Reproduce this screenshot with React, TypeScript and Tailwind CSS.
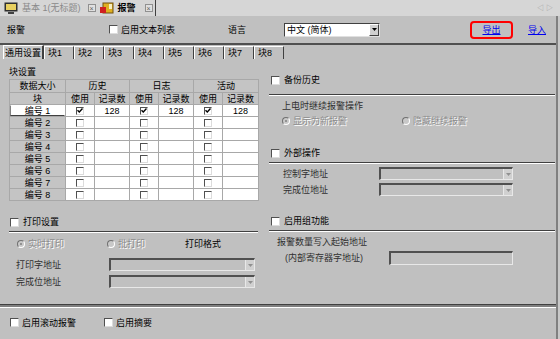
import React from 'react';

const Check = ({ on = false, small = false }: { on?: boolean; small?: boolean }) => (
  <span
    className={`${small ? 'w-[8px] h-[8px]' : 'w-[9px] h-[9px]'} inline-flex items-center justify-center shrink-0 bg-white border border-t-[#505050] border-l-[#505050] border-b-[#dcdcdc] border-r-[#dcdcdc]`}
  >
    {on && (
      <svg width="6" height="5" viewBox="0 0 6 5">
        <path d="M0.5 2.2 L2.3 4 L5.5 0.6" stroke="#000" strokeWidth="1.4" fill="none" />
      </svg>
    )}
  </span>
);

const Radio = ({ on = false }: { on?: boolean }) => (
  <span className="w-[8px] h-[8px] rounded-full shrink-0 inline-flex items-center justify-center bg-[#c8c8c8] border border-t-[#707070] border-l-[#707070] border-b-white border-r-white">
    {on && <span className="w-[2px] h-[2px] rounded-full bg-[#808080]" />}
  </span>
);

const Combo = ({ w }: { w: string }) => (
  <div className={`${w} h-[13px] flex border-t-2 border-l-2 border-t-[#505050] border-l-[#505050] border-b border-r border-b-[#e8e8e8] border-r-[#e8e8e8] bg-[#c0c0c0]`}>
    <div className="flex-1" />
    <div className="w-[9px] h-full bg-[#d0d0d0] border-l border-[#e8e8e8] flex items-center justify-center">
      <svg width="5" height="3" viewBox="0 0 5 3">
        <path d="M0 0h5L2.5 3z" fill="#909090" />
      </svg>
    </div>
  </div>
);

const Rule = () => <div className="h-[2px] border-t border-t-[#404040] border-b border-b-white" />;

const Off = ({ children }: { children: React.ReactNode }) => (
  <span className="text-[#8c8c8c] [text-shadow:1px_1px_0_#ffffff]">{children}</span>
);

const tabs = ['块1', '块2', '块3', '块4', '块5', '块6', '块7', '块8'];
const rows = [1, 2, 3, 4, 5, 6, 7, 8];

const hdr = 'bg-[#c4c4c4] flex items-center justify-center';

export default function App() {
  return (
    <div className="w-[560px] h-[339px] overflow-hidden bg-[#c8c8c8] text-[9px] leading-[12px] text-black font-['Liberation_Sans','Noto_Sans_CJK_SC',sans-serif]">
      {/* document tabs */}
      <div className="h-[16px] bg-[#d6d6d6] flex items-center pl-[4px]">
        <svg width="14" height="12" viewBox="0 0 14 12" className="shrink-0">
          <rect x="0.5" y="0.5" width="13" height="9" fill="#303030" />
          <rect x="2" y="2" width="10" height="6" fill="#e8d060" />
          <rect x="4" y="10" width="6" height="2" fill="#404040" />
        </svg>
        <span className="ml-[4px] text-[#8a8a8a]">基本 1(无标题)</span>
        <span className="ml-[7px] w-[8px] h-[8px] border border-[#909090] bg-[#e0e0e0] flex items-center justify-center text-[7px] leading-none text-[#606060]">×</span>
        <svg width="14" height="12" viewBox="0 0 14 12" className="ml-[4px] shrink-0">
          <rect x="3" y="1" width="10" height="10" fill="#e0b020" stroke="#705010" strokeWidth="1" />
          <rect x="0" y="5" width="6" height="6" fill="#d02020" />
          <rect x="9" y="2" width="3" height="5" fill="#f8f0c0" />
        </svg>
        <span className="ml-[4px] font-bold">报警</span>
        <span className="ml-[9px] w-[8px] h-[8px] border border-[#909090] bg-[#e0e0e0] flex items-center justify-center text-[7px] leading-none text-[#606060]">×</span>
        <span className="ml-[2px] w-[1px] h-[16px] bg-[#404040]" />
        <div className="flex-1" />
        <span className="text-[7px] text-[#a0a0a0] mr-[5px] tracking-[2px]">◁▷</span>
      </div>

      <div className="w-[558px] h-[323px] bg-[#c0c0c0] border-r-2 border-r-[#808080] flex flex-col">
        {/* header row */}
        <div className="h-[27px] flex items-center pl-[7px] shrink-0">
          <span className="w-[102px]">报警</span>
          <Check />
          <span className="ml-[3px] w-[107px]">启用文本列表</span>
          <span className="w-[56px]">语言</span>
          <div className="w-[96px] h-[14px] flex bg-white border border-t-[#404040] border-l-[#404040] border-b-[#e0e0e0] border-r-[#e0e0e0]">
            <span className="flex-1 pl-[2px] leading-[12px]">中文 (简体)</span>
            <span className="w-[10px] h-full bg-[#d0d0d0] border border-t-white border-l-white border-b-[#404040] border-r-[#404040] flex items-center justify-center">
              <svg width="5" height="3" viewBox="0 0 5 3"><path d="M0 0h5L2.5 3z" fill="#000" /></svg>
            </span>
          </div>
          <span className="ml-[90px] w-[43px] h-[18px] rounded-[4px] border-2 border-[#ff0000] flex items-center justify-center">
            <span className="text-[#0000ee] underline">导出</span>
          </span>
          <span className="ml-[15px] text-[#0000ee] underline">导入</span>
        </div>

        {/* settings tabs */}
        <div className="h-[16px] border-t-2 border-t-[#505050] flex items-end pl-[3px] shrink-0">
          <span className="h-[14px] w-[41px] flex items-center justify-center border-l border-t border-l-white border-t-white border-r-2 border-r-[#404040] bg-[#c8c8c8]">通用设置</span>
          {tabs.map((t) => (
            <span key={t} className="h-[13px] w-[30px] flex items-center pl-[3px] border-l border-t border-l-white border-t-white border-r border-r-[#404040]">
              {t}
            </span>
          ))}
        </div>

        {/* body */}
        <div className="h-[245px] flex shrink-0">
          {/* left column */}
          <div className="w-[258px] pl-[9px] pt-[7px] flex flex-col">
            <span className="h-[12px]">块设置</span>
            <div className="mt-[1px] w-[250px] grid grid-cols-[55px_28px_34px_28px_34px_28px_35px] grid-rows-[12px_11px] auto-rows-[11px] gap-px bg-[#a8a8a8] border border-[#a8a8a8]">
              <div className={hdr}>数据大小</div>
              <div className={`${hdr} col-span-2`}>历史</div>
              <div className={`${hdr} col-span-2`}>日志</div>
              <div className={`${hdr} col-span-2`}>活动</div>
              <div className={hdr}>块</div>
              <div className={hdr}>使用</div>
              <div className={hdr}>记录数</div>
              <div className={hdr}>使用</div>
              <div className={hdr}>记录数</div>
              <div className={hdr}>使用</div>
              <div className={hdr}>记录数</div>
              {rows.map((r) => (
                <React.Fragment key={r}>
                  <div
                    className={`flex items-center justify-center ${r === 1 ? 'bg-white border border-b-[#404040] border-l-[#808080] border-t-white border-r-white' : 'bg-[#c4c4c4]'}`}
                  >
                    编号 {r}
                  </div>
                  <div className="bg-white flex items-center justify-center"><Check small on={r === 1} /></div>
                  <div className="bg-white flex items-center justify-center">{r === 1 ? '128' : ''}</div>
                  <div className="bg-white flex items-center justify-center"><Check small on={r === 1} /></div>
                  <div className="bg-white flex items-center justify-center">{r === 1 ? '128' : ''}</div>
                  <div className="bg-white flex items-center justify-center"><Check small on={r === 1} /></div>
                  <div className="bg-white flex items-center justify-center">{r === 1 ? '128' : ''}</div>
                </React.Fragment>
              ))}
            </div>

            <div className="mt-[15px] h-[12px] flex items-center pl-[1px]">
              <Check />
              <span className="ml-[4px]">打印设置</span>
            </div>
            <div className="mt-[3px] w-[249px]"><Rule /></div>
            <div className="mt-[5px] h-[12px] flex items-center pl-[8px]">
              <Radio on />
              <span className="ml-[3px] w-[79px]"><Off>实时打印</Off></span>
              <Radio />
              <span className="ml-[3px] w-[67px]"><Off>批打印</Off></span>
              <span>打印格式</span>
            </div>
            <div className="mt-[8px] flex items-center pl-[7px]">
              <span className="w-[93px] text-[#303030]">打印字地址</span>
              <Combo w="w-[146px]" />
            </div>
            <div className="mt-[4px] flex items-center pl-[7px]">
              <span className="w-[93px] text-[#303030]">完成位地址</span>
              <Combo w="w-[146px]" />
            </div>
          </div>

          {/* right column */}
          <div className="flex-1 ml-[11px] pt-[15px] pr-[1px] flex flex-col">
            <div className="h-[12px] flex items-center pl-[2px]">
              <Check />
              <span className="ml-[4px]">备份历史</span>
            </div>
            <div className="mt-[8px]"><Rule /></div>
            <div className="mt-[4px] h-[12px] pl-[13px] text-[#303030]">上电时继续报警操作</div>
            <div className="mt-[3px] h-[12px] flex items-center pl-[13px]">
              <Radio on />
              <span className="ml-[3px] w-[109px]"><Off>显示为新报警</Off></span>
              <Radio />
              <span className="ml-[3px]"><Off>隐藏继续报警</Off></span>
            </div>

            <div className="mt-[20px] h-[12px] flex items-center pl-[2px]">
              <Check />
              <span className="ml-[4px]">外部操作</span>
            </div>
            <div className="mt-[3px]"><Rule /></div>
            <div className="mt-[3px] flex items-center pl-[14px]">
              <span className="w-[96px] text-[#303030]">控制字地址</span>
              <Combo w="w-[134px]" />
            </div>
            <div className="mt-[3px] flex items-center pl-[14px]">
              <span className="w-[96px] text-[#303030]">完成位地址</span>
              <Combo w="w-[134px]" />
            </div>

            <div className="mt-[19px] h-[12px] flex items-center pl-[2px]">
              <Check />
              <span className="ml-[4px]">启用组功能</span>
            </div>
            <div className="mt-[3px]"><Rule /></div>
            <div className="mt-[4px] h-[12px] pl-[8px] text-[#303030]">报警数量写入起始地址</div>
            <div className="mt-[3px] flex items-center pl-[16px]">
              <span className="w-[104px] text-[#303030]">(内部寄存器字地址)</span>
              <div className="w-[124px] h-[14px] bg-[#c0c0c0] border-t-2 border-l-2 border-t-[#505050] border-l-[#505050] border-b border-r border-b-[#e8e8e8] border-r-[#e8e8e8]" />
            </div>
          </div>
        </div>

        {/* double rule */}
        <div className="h-[4px] border-t border-t-[#404040] bg-[#808080] border-b border-b-white shrink-0" />

        {/* bottom options */}
        <div className="flex-1 flex items-center pl-[10px] pb-[2px]">
          <Check />
          <span className="ml-[3px] w-[82px]">启用滚动报警</span>
          <Check />
          <span className="ml-[3px]">启用摘要</span>
        </div>
      </div>
    </div>
  );
}
